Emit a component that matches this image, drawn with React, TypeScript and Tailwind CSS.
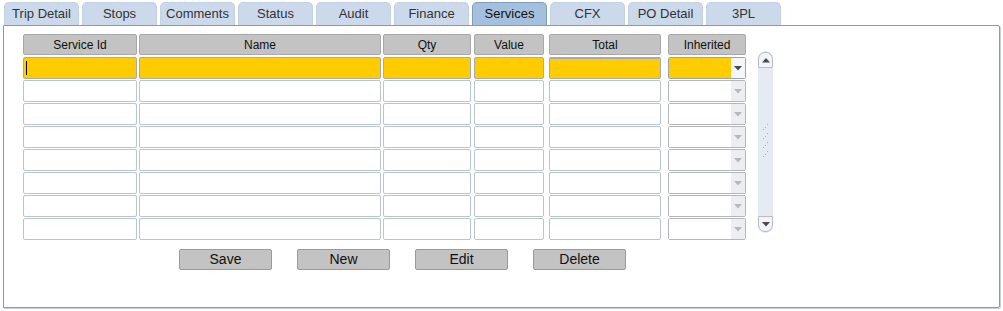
import React from "react";

const tabs = ["Trip Detail", "Stops", "Comments", "Status", "Audit", "Finance", "Services", "CFX", "PO Detail", "3PL"];

const cols = [
  { name: "Service Id", w: "w-[114px]", ml: "ml-0" },
  { name: "Name", w: "w-[242px]", ml: "ml-[2px]" },
  { name: "Qty", w: "w-[88px]", ml: "ml-[2px]" },
  { name: "Value", w: "w-[70px]", ml: "ml-[3px]" },
  { name: "Total", w: "w-[112px]", ml: "ml-[5px]" },
  { name: "Inherited", w: "w-[78px]", ml: "ml-[7px]" },
];

function Arrow({ dark }: { dark: boolean }) {
  return (
    <svg width="8" height="5" viewBox="0 0 8 5">
      <path d="M0 0 L8 0 L4 4.5 Z" fill={dark ? "#4a4a4a" : "#b4b8bf"} />
    </svg>
  );
}

function Row({ active }: { active: boolean }) {
  const base = active
    ? "bg-[#ffcc00] border-[#a9a9a9]"
    : "bg-white border-[#b8c4d4]";
  return (
    <div className="flex h-[22px] mb-[1px]">
      {cols.slice(0, 5).map((c, i) => (
        <div
          key={i}
          className={`${c.w} ${c.ml} h-full border rounded-[2px] ${base} ${i === 4 && active ? "border-[#9a9a9a] border-t-2" : ""} relative`}
        >
          {i === 0 && active && <div className="absolute left-[2px] top-[3px] w-[1px] h-[14px] bg-black" />}
        </div>
      ))}
      <div className={`w-[78px] ml-[7px] h-full border rounded-[2px] flex ${active ? "border-[#9aa3ae]" : "border-[#b3b7bd]"}`}>
        <div className={`flex-1 ${active ? "bg-[#ffcc00]" : "bg-white"}`} />
        <div className={`w-[14px] flex items-center justify-center ${active ? "bg-[#f4f6f8]" : "bg-[#eceef1]"}`}>
          <Arrow dark={active} />
        </div>
      </div>
    </div>
  );
}

export default function App() {
  return (
    <div className="w-[1003px] h-[311px] bg-white relative" style={{ fontFamily: '"Liberation Sans", Arial, sans-serif' }}>
      <div className="flex pl-[4px] pt-[2px] gap-[3px] h-[25px]">
        {tabs.map((t) => (
          <div
            key={t}
            className={`w-[75px] h-[23px] rounded-t-[5px] border border-b-0 flex items-center justify-center text-[13px] ${
              t === "Services"
                ? "bg-[#a4c0de] border-[#7f9cbc] text-[#111]"
                : "bg-[#cbd9eb] border-[#c3d1e4] text-[#333]"
            }`}
          >
            {t}
          </div>
        ))}
      </div>
      <div className="mx-[3px] h-[283px] border border-[#7f9db9] rounded-r-[2px] shadow-[1px_1px_0_#c9d3de] flex flex-col">
        <div className="flex pt-[8px] pl-[19px]">
          <div className="flex flex-col">
            <div className="flex h-[21px] mb-[2px]">
              {cols.map((c) => (
                <div
                  key={c.name}
                  className={`${c.w} ${c.ml} h-full bg-[#c3c3c3] border border-[#a8a8a8] rounded-[2px] flex items-center justify-center text-[12px] text-[#111]`}
                >
                  {c.name}
                </div>
              ))}
            </div>
            {Array.from({ length: 8 }).map((_, i) => (
              <Row key={i} active={i === 0} />
            ))}
          </div>
          <div className="ml-[12px] mt-[17px] w-[15px] h-[182px] bg-[#e6ebf3] rounded-[7px] flex flex-col items-center justify-between border border-[#e6ebf3]">
            <div className="w-[15px] h-[16px] rounded-t-[7px] border border-[#b5bcc6] bg-[#f2f4f8] flex items-center justify-center">
              <svg width="8" height="5" viewBox="0 0 8 5">
                <path d="M0 4.5 L8 4.5 L4 0 Z" fill="#4a4a4a" />
              </svg>
            </div>
            <svg width="8" height="36" viewBox="0 0 8 36">
              {[0, 9, 18, 27].map((y) => (
                <g key={y} fill="#9fb0c6">
                  <rect x="5" y={y} width="1" height="1" />
                  <rect x="3" y={y + 3} width="1" height="1" />
                  <rect x="1" y={y + 5} width="1" height="1" />
                </g>
              ))}
            </svg>
            <div className="w-[15px] h-[16px] rounded-b-[7px] border border-[#b5bcc6] bg-[#f2f4f8] flex items-center justify-center">
              <svg width="8" height="5" viewBox="0 0 8 5">
                <path d="M0 0 L8 0 L4 4.5 Z" fill="#4a4a4a" />
              </svg>
            </div>
          </div>
        </div>
        <div className="flex pl-[175px] gap-[25px] mt-[8px]">
          {["Save", "New", "Edit", "Delete"].map((b) => (
            <div
              key={b}
              className="w-[93px] h-[21px] bg-[#c3c3c3] border border-[#9a9a9a] rounded-[2px] flex items-center justify-center text-[14px] text-[#111]"
            >
              {b}
            </div>
          ))}
        </div>
      </div>
    </div>
  );
}
